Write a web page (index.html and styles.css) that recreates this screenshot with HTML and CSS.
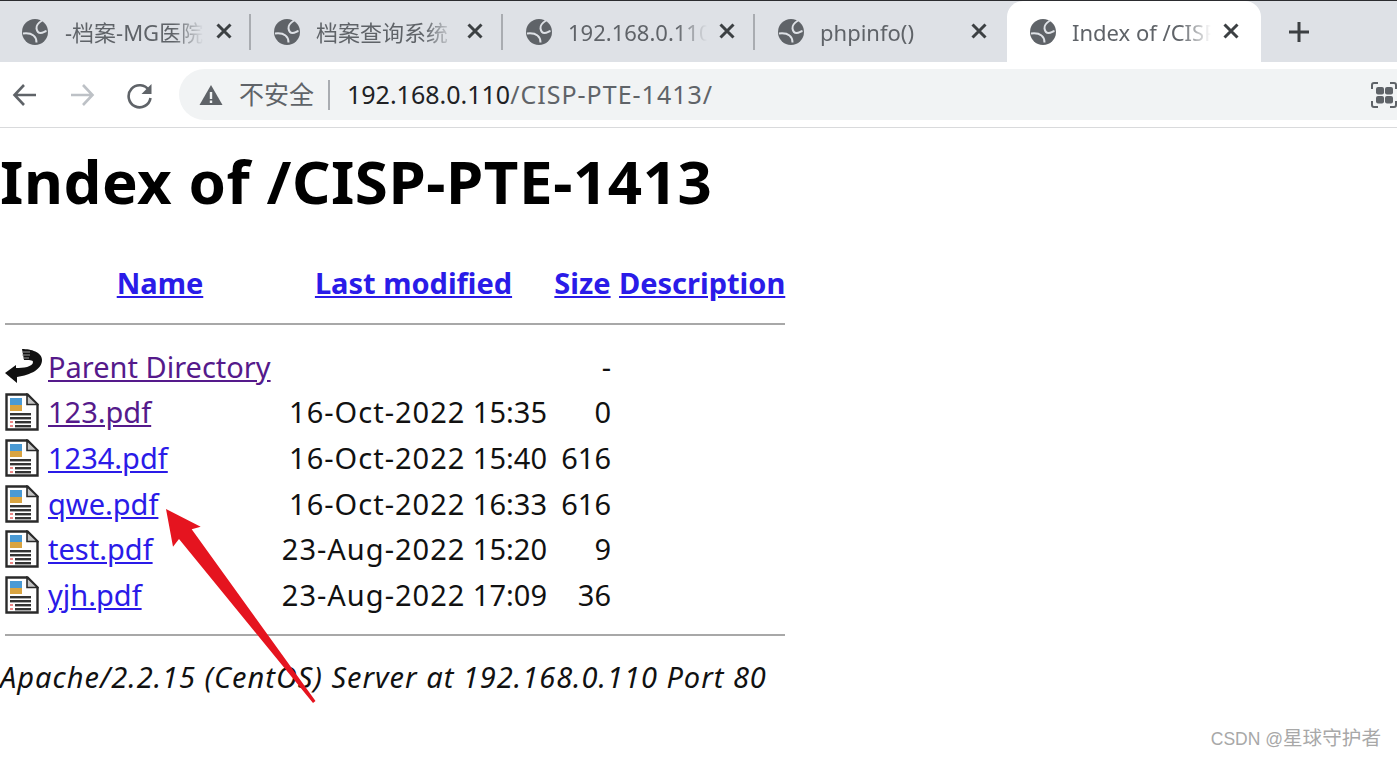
FILE: index.html
```html
<!DOCTYPE html>
<html lang="zh">
<head>
<meta charset="utf-8">
<title>Index of /CISP-PTE-1413</title>
<link rel="stylesheet" href="styles.css">
</head>
<body>
<svg class="defs" width="0" height="0">
  <defs>
    <symbol id="globe" viewBox="0 0 26 26">
      <circle cx="13" cy="13" r="13" fill="#5f6368"/>
      <path d="M1 14.500c4-.5 8 0 10.500 2 2 1.500 3 4 3 7M20 1.500c-3 2-6 5-5.500 8 .5 3 2 4.500 4 4.500 2.500 0 4-1.500 6-2" fill="none" stroke="#dee1e6" stroke-width="2"/>
    </symbol>
    <symbol id="doc" viewBox="0 0 34 38">
      <path d="M1.500 1.500h21l10 10v25h-31z" fill="#fff" stroke="#2a2a2a" stroke-width="2.400"/>
      <path d="M22 1.500v10h10.500z" fill="#c4c4c4" stroke="#2a2a2a" stroke-width="1.600"/>
      <rect x="5" y="5" width="12" height="7" fill="#4a9ad4"/>
      <rect x="5" y="12" width="12" height="6" fill="#d9a441"/>
      <rect x="5" y="20" width="21" height="2.400" fill="#333"/>
      <rect x="5" y="24" width="21" height="2.400" fill="#333"/>
      <rect x="10" y="28" width="16" height="2.400" fill="#333"/>
      <rect x="10" y="32" width="16" height="2.400" fill="#333"/>
      <rect x="5" y="28" width="3" height="2" fill="#e88"/>
      <rect x="5" y="32" width="3" height="2" fill="#e88"/>
    </symbol>
    <symbol id="back" viewBox="0 0 37 36">
      <path d="M0 24 11 16v3c7 0 17-1 17-6 0-2-4-2-9-2L17 0c9 0 20 3 20 11 0 9-11 15-25 17v6z" fill="#111"/>
      <path d="M17 3h8M17 6h8M18 9h6" stroke="#9a9a9a" stroke-width="1.100"/>
    </symbol>
    <symbol id="close" viewBox="0 0 18 18">
      <path d="M2.500 2.500 15.500 15.500M15.500 2.500 2.500 15.500" stroke="#3c4043" stroke-width="3"/>
    </symbol>
  </defs>
</svg>

<header class="tabbar">
  <div class="tab">
    <svg class="globe"><use href="#globe"/></svg>
    <span class="tab-title tab-first">-档案-MG医院</span>
    <svg class="tab-close"><use href="#close"/></svg>
  </div>
  <div class="tab">
    <svg class="globe"><use href="#globe"/></svg>
    <span class="tab-title">档案查询系统</span>
    <svg class="tab-close"><use href="#close"/></svg>
  </div>
  <div class="tab">
    <svg class="globe"><use href="#globe"/></svg>
    <span class="tab-title">192.168.0.110</span>
    <svg class="tab-close"><use href="#close"/></svg>
  </div>
  <div class="tab tab-plain">
    <svg class="globe"><use href="#globe"/></svg>
    <span class="tab-title">phpinfo()</span>
    <svg class="tab-close"><use href="#close"/></svg>
  </div>
  <div class="tab tab-active">
    <svg class="globe"><use href="#globe"/></svg>
    <span class="tab-title">Index of /CISP</span>
    <svg class="tab-close"><use href="#close"/></svg>
  </div>
  <svg class="new-tab" width="24" height="24" viewBox="0 0 24 24"><path d="M12 2v20M2 12h20" stroke="#3c4043" stroke-width="3"/></svg>
</header>

<nav class="toolbar">
  <svg class="nav-icon" width="28" height="28" viewBox="0 0 28 28"><path d="M26 14H5M14 4 4.500 14 14 24" fill="none" stroke="#5f6368" stroke-width="2.600"/></svg>
  <svg class="nav-icon" width="28" height="28" viewBox="0 0 28 28"><path d="M3 14h21M15 4l9.500 10L15 24" fill="none" stroke="#bdc1c6" stroke-width="2.600"/></svg>
  <svg class="nav-icon" width="28" height="28" viewBox="0 0 28 28"><path d="M23 9.500A11 11 0 1 0 24.500 17" fill="none" stroke="#5f6368" stroke-width="2.600"/><path d="M25.500 3v10h-10z" fill="#5f6368"/></svg>
  <div class="omnibox">
    <svg class="warn" width="24" height="22" viewBox="0 0 24 22"><path d="M12 1 23.500 21H.5z" fill="#5f6368"/><path d="M10.800 8h2.400v7h-2.400zM10.800 16.500h2.400v2.400h-2.400z" fill="#f1f3f4"/></svg>
    <span class="not-secure">不安全</span>
    <span class="omni-sep"></span>
    <span class="url"><span class="url-host">192.168.0.110</span><span class="url-path">/CISP-PTE-1413/</span></span>
    <svg class="ext" width="28" height="26" viewBox="0 0 28 26"><path d="M1 7V3a2 2 0 0 1 2-2h4M1 19v4a2 2 0 0 0 2 2h4M19 1h4a2 2 0 0 1 2 2v4M19 25h4a2 2 0 0 0 2-2v-4" fill="none" stroke="#5f6368" stroke-width="2"/><rect x="5" y="5" width="8" height="7.500" rx="2" fill="#5f6368"/><rect x="14" y="5" width="8" height="7.500" rx="2" fill="#5f6368"/><rect x="5" y="14" width="8" height="7.500" rx="2" fill="#5f6368"/><rect x="14" y="14" width="8" height="7.500" rx="2" fill="#5f6368"/></svg>
  </div>
</nav>

<main class="page">
  <h1 class="title">Index of /CISP-PTE-1413</h1>
  <table class="listing">
    <colgroup><col class="c-icon"><col class="c-name"><col class="c-mod"><col class="c-size"><col class="c-desc"></colgroup>
    <tr class="head">
      <th></th>
      <th><a href="#">Name</a></th>
      <th class="pad-mod"><a href="#">Last modified</a></th>
      <th class="pad-size"><a href="#">Size</a></th>
      <th class="pad-desc"><a href="#">Description</a></th>
    </tr>
    <tr class="rule-top"><td colspan="5" class="rule-cell rule-cell-top"><hr class="rule"></td></tr>
    <tr class="row">
      <td class="icon-cell"><svg class="icon-back"><use href="#back"/></svg></td>
      <td><a class="visited" href="#">Parent Directory</a></td>
      <td class="num"></td>
      <td class="num">-</td>
      <td></td>
    </tr>
    <tr class="row">
      <td class="icon-cell"><svg class="icon-doc"><use href="#doc"/></svg></td>
      <td><a class="visited" href="#">123.pdf</a></td>
      <td class="num"><span class="date">16-Oct-2022</span> 15:35</td>
      <td class="num">0</td>
      <td></td>
    </tr>
    <tr class="row">
      <td class="icon-cell"><svg class="icon-doc"><use href="#doc"/></svg></td>
      <td><a href="#">1234.pdf</a></td>
      <td class="num"><span class="date">16-Oct-2022</span> 15:40</td>
      <td class="num">616</td>
      <td></td>
    </tr>
    <tr class="row">
      <td class="icon-cell"><svg class="icon-doc"><use href="#doc"/></svg></td>
      <td><a href="#">qwe.pdf</a></td>
      <td class="num"><span class="date">16-Oct-2022</span> 16:33</td>
      <td class="num">616</td>
      <td></td>
    </tr>
    <tr class="row">
      <td class="icon-cell"><svg class="icon-doc"><use href="#doc"/></svg></td>
      <td><a href="#">test.pdf</a></td>
      <td class="num"><span class="date">23-Aug-2022</span> 15:20</td>
      <td class="num">9</td>
      <td></td>
    </tr>
    <tr class="row">
      <td class="icon-cell"><svg class="icon-doc"><use href="#doc"/></svg></td>
      <td><a href="#">yjh.pdf</a></td>
      <td class="num"><span class="date">23-Aug-2022</span> 17:09</td>
      <td class="num">36</td>
      <td></td>
    </tr>
    <tr class="rule-bottom"><td colspan="5" class="rule-cell"><hr class="rule"></td></tr>
  </table>
  <address class="server">Apache/2.2.15 (CentOS) Server at 192.168.0.110 Port 80</address>
</main>

<svg class="annotation" width="1397" height="757" viewBox="0 0 1397 757"><path d="M166 509 200.700 526.700 191.700 529.300 315.500 701 313 703 179 539 173 546.700z" fill="#e5141f"/></svg>
<div class="watermark">CSDN @<span class="watermark-cjk">星球守护者</span></div>
</body>
</html>
```
FILE: styles.css
```css
* { box-sizing: border-box; }
html, body { margin: 0; padding: 0; }
body {
  width: 1397px;
  height: 757px;
  overflow: hidden;
  position: relative;
  background: #fff;
  color: #111;
  font-family: "Noto Sans", "Noto Sans CJK SC", sans-serif;
}
.defs { position: absolute; }

.tabbar {
  display: flex;
  align-items: stretch;
  height: 62px;
  background: #dee1e6;
  border-top: 1px solid #2b2c2f;
}
.tab {
  position: relative;
  width: 252px;
  display: flex;
  align-items: center;
  padding: 0 16px 0 22px;
  flex: none;
  border-right: 2px solid transparent;
}
.tab::after {
  content: "";
  position: absolute;
  right: -1px;
  top: 13px;
  bottom: 12px;
  width: 2px;
  background: #a9acb1;
}
.tab-plain::after { display: none; }
.tab-active {
  width: 254px;
  margin-left: -1px;
  padding-left: 23px;
  background: #fff;
  border-radius: 16px 16px 0 0;
}
.tab-active::after { display: none; }
.globe { width: 26px; height: 26px; flex: none; }
.tab-title {
  margin-left: 16px;
  width: 139px;
  overflow: hidden;
  white-space: nowrap;
  font-size: 22px;
  line-height: 30px;
  color: #5f6368;
  -webkit-mask-image: linear-gradient(to right, #000 78%, transparent 100%);
  mask-image: linear-gradient(to right, #000 78%, transparent 100%);
}
.tab-first { margin-left: 17px; }
.tab-close { width: 18px; height: 18px; margin-left: 11px; flex: none; margin-top: -1px; }
.new-tab { align-self: center; margin-left: 26px; flex: none; }

.toolbar {
  display: flex;
  align-items: center;
  height: 66px;
  padding: 0 0 0 10px;
  gap: 30px;
  border-bottom: 1px solid #d9dadc;
}
.nav-icon { flex: none; }
.omnibox {
  flex: 1;
  height: 51px;
  margin-left: -5px;
  display: flex;
  align-items: center;
  padding-left: 20px;
  background: #f1f3f4;
  border-radius: 26px 0 0 26px;
  font-size: 25px;
  line-height: 34px;
  white-space: nowrap;
}
.warn { flex: none; }
.not-secure { margin-left: 16px; color: #5f6368; margin-top: -2px; }
.omni-sep { width: 2px; height: 30px; background: #a9acb1; margin: 0 17px 0 14px; }
.url { color: #5f6368; flex: 1; margin-top: -2px; }
.url-host { color: #202124; }
.url-path { letter-spacing: 1px; }
.ext { flex: none; margin-right: -2px; }

.page { padding: 0; }
.title {
  margin: 0;
  height: 132px;
  padding-top: 13px;
  font-size: 60px;
  line-height: 80px;
  letter-spacing: .55px;
  font-weight: 700;
  color: #000;
}
.listing {
  table-layout: fixed;
  width: 785px;
  border-collapse: collapse;
  font-size: 29px;
  line-height: 40px;
}
.c-icon { width: 48px; }
.c-name { width: 224px; }
.c-mod { width: 275px; }
.c-size { width: 64px; }
.c-desc { width: 174px; }
th, td { padding: 0; white-space: nowrap; }
.head { height: 45px; }
th { font-weight: 700; text-align: center; }
.pad-mod { padding-left: 8px; }
.pad-size { padding-left: 7px; }
.pad-desc { padding-left: 8px; text-align: left; }
a { color: #2a1be8; }
a.visited { color: #551a8b; }
.rule-top { height: 39px; }
.rule-bottom { height: 34px; }
.rule-cell { padding-left: 5px; }
.rule-cell-top { padding-bottom: 2px; }
.rule {
  margin: 0;
  height: 2px;
  border: 0;
  background: #a8a8a8;
}
.row { height: 45.6px; }
.icon-cell { padding-left: 5px; line-height: 0; }
.icon-doc { width: 34px; height: 38px; }
.icon-back { width: 37px; height: 36px; }
.num { text-align: right; color: #111; }
.date { letter-spacing: 1px; }
.server {
  font-style: italic;
  font-size: 29px;
  line-height: 50px;
  letter-spacing: 1px;
  color: #111;
}

.annotation { position: absolute; left: 0; top: 0; pointer-events: none; }
.watermark {
  position: absolute;
  right: 16px;
  top: 726px;
  font-family: "Liberation Sans", "Noto Sans CJK SC", sans-serif;
  font-size: 17.5px;
  line-height: 24px;
  color: #a8a8a8;
}
.watermark-cjk { font-size: 19.6px; }
```
